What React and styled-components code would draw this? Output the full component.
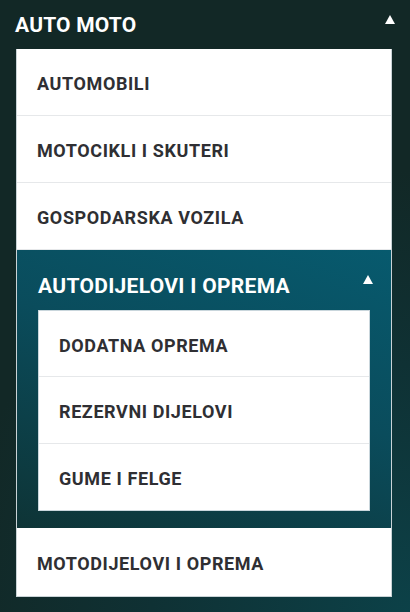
import React from 'react';
import styled, { createGlobalStyle } from 'styled-components';

const GlobalStyle = createGlobalStyle`
  html, body {
    margin: 0;
    padding: 0;
  }
  body {
    font-family: Roboto, "Liberation Sans", sans-serif;
    background: #0f2e2f;
  }
`;

const Page = styled.div`
  width: 410px;
  height: 612px;
  box-sizing: border-box;
  padding: 0 18px 15px 16px;
  background: radial-gradient(ellipse 140% 90% at 100% 100%, #0c4148 0%, #0f3134 45%, #122826 80%);
  display: flex;
  flex-direction: column;
`;

const Header = styled.div`
  height: 50px;
  display: flex;
  align-items: center;
  justify-content: space-between;
  box-sizing: border-box;
`;

const Title = styled.h2`
  margin: 0 0 0 -1px;
  color: #fff;
  font-size: 21px;
  font-weight: 700;
  letter-spacing: 0.2px;
`;

const Arrow = styled.span`
  width: 0;
  height: 0;
  border-left: 5px solid transparent;
  border-right: 5px solid transparent;
  border-bottom: 9px solid #fff;
  margin-right: -3px;
  margin-bottom: ${props => props.$offset || 0}px;
`;

const Panel = styled.ul`
  list-style: none;
  margin: 0;
  padding: 0;
  background: #fff;
  border: 1px solid #c9d3d6;
  border-top: none;
`;

const Item = styled.li`
  height: ${props => props.$h || 67}px;
  box-sizing: border-box;
  display: flex;
  align-items: center;
  padding-left: ${props => props.$pad || 20}px;
  padding-top: 3px;
  color: #2f2f33;
  font-size: 18px;
  font-weight: 700;
  letter-spacing: 0.6px;
  border-bottom: ${props => (props.$last ? 'none' : '1px solid #e6e8ea')};
`;

const Group = styled.li`
  padding: 0 21px 17px 21px;
  background: linear-gradient(200deg, #075a6e 0%, #0a4c5c 45%, #0e3436 100%);
`;

const GroupHeader = styled.div`
  height: 60px;
  display: flex;
  align-items: center;
  justify-content: space-between;
  padding-top: 12px;
  box-sizing: border-box;
`;

const GroupTitle = styled.span`
  color: #fff;
  font-size: 21px;
  font-weight: 700;
  letter-spacing: 0.3px;
`;

const SubList = styled.ul`
  list-style: none;
  margin: 0;
  padding: 0;
  background: #fff;
  border: 1px solid #c9d6dc;
`;

const App = () => {
  const top = ['AUTOMOBILI', 'MOTOCIKLI I SKUTERI', 'GOSPODARSKA VOZILA'];
  const sub = ['DODATNA OPREMA', 'REZERVNI DIJELOVI', 'GUME I FELGE'];
  return (
    <>
      <GlobalStyle />
      <Page>
        <Header>
          <Title>AUTO MOTO</Title>
          <Arrow $offset={10} />
        </Header>
        <Panel>
          {top.map(t => (
            <Item key={t}>{t}</Item>
          ))}
          <Group>
            <GroupHeader>
              <GroupTitle>AUTODIJELOVI I OPREMA</GroupTitle>
              <Arrow $offset={14} />
            </GroupHeader>
            <SubList>
              {sub.map((t, i) => (
                <Item key={t} $h={i === 1 ? 67 : 66} $last={i === sub.length - 1}>
                  {t}
                </Item>
              ))}
            </SubList>
          </Group>
          <Item $h={68} $last>MOTODIJELOVI I OPREMA</Item>
        </Panel>
      </Page>
    </>
  );
};

export default App;
